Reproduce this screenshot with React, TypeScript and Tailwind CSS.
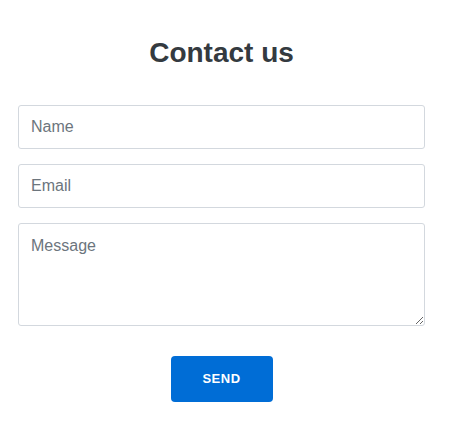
import React from 'react';

export default function App() {
  return (
    <div className="min-h-[439px] w-[449px] bg-white font-['Liberation_Sans',Arial,sans-serif]">
      <form
        className="flex flex-col pl-[18px] pr-[24px] pt-[36px]"
        onSubmit={(e) => e.preventDefault()}
      >
        <h1 className="text-center text-[28px] font-bold leading-[34px] text-[#343a40]">Contact us</h1>

        <div className="mt-[35px] flex flex-col gap-[15px]">
          <input
            type="text"
            placeholder="Name"
            className="h-[44px] w-full rounded-[3px] border border-[#d3d8de] px-3 text-base text-[#333] placeholder:text-[#6c757d] outline-none"
          />
          <input
            type="email"
            placeholder="Email"
            className="h-[44px] w-full rounded-[3px] border border-[#d3d8de] px-3 text-base text-[#333] placeholder:text-[#6c757d] outline-none"
          />
          <textarea
            placeholder="Message"
            className="h-[103px] w-full rounded-[3px] border border-[#d3d8de] px-3 py-[12px] text-base leading-[20px] text-[#333] placeholder:text-[#6c757d] outline-none"
          />
        </div>

        <div className="mt-[30px] flex justify-center">
          <button
            type="submit"
            className="h-[46px] w-[102px] rounded-[4px] bg-[#006dd6] text-[13px] font-bold tracking-[0.5px] text-white"
          >
            SEND
          </button>
        </div>
      </form>
    </div>
  );
}
